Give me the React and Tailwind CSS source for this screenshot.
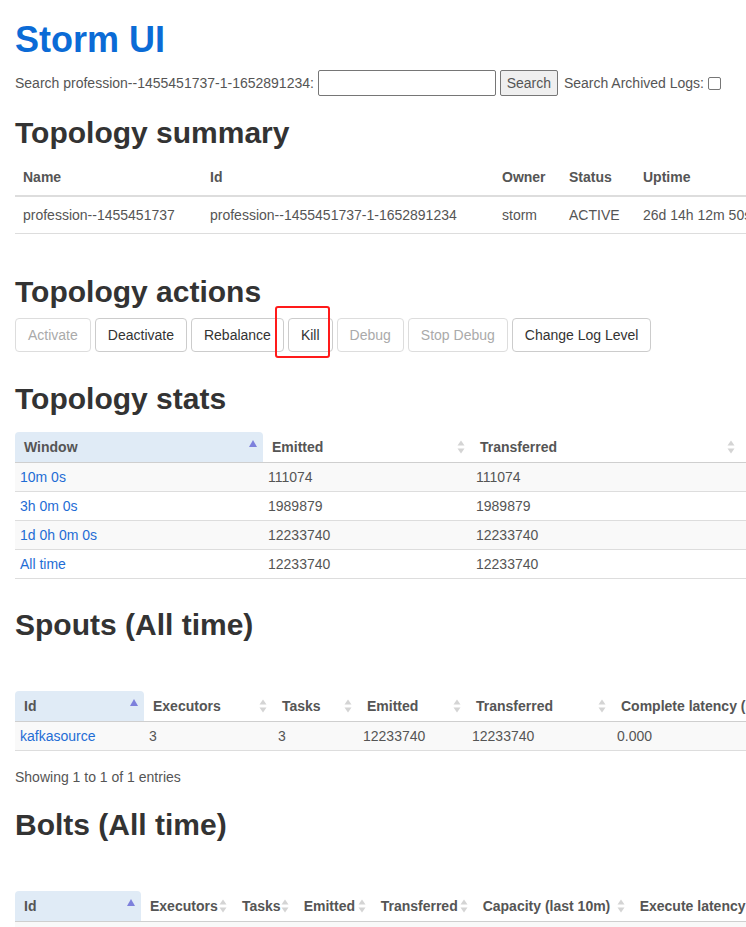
import React from 'react';

const summaryCols = [
  { label: 'Name', w: 187 },
  { label: 'Id', w: 292 },
  { label: 'Owner', w: 67 },
  { label: 'Status', w: 74 },
  { label: 'Uptime', w: 130 },
  { label: 'Num workers', w: 110 },
  { label: 'Num executors', w: 120 },
  { label: 'Num tasks', w: 100 },
];

const summaryRow = [
  'profession--1455451737',
  'profession--1455451737-1-1652891234',
  'storm',
  'ACTIVE',
  '26d 14h 12m 50s',
  '3',
  '9',
  '9',
];

const actions = [
  { label: 'Activate', disabled: true },
  { label: 'Deactivate' },
  { label: 'Rebalance' },
  { label: 'Kill' },
  { label: 'Debug', disabled: true },
  { label: 'Stop Debug', disabled: true },
  { label: 'Change Log Level' },
];

const statsCols = [
  { label: 'Window', w: 248, sorted: true },
  { label: 'Emitted', w: 208 },
  { label: 'Transferred', w: 270 },
  { label: 'Complete latency (ms)', w: 190 },
  { label: 'Acked', w: 110 },
  { label: 'Failed', w: 90 },
];

const statsRows = [
  ['10m 0s', '111074', '111074', '0.000', '0', '0'],
  ['3h 0m 0s', '1989879', '1989879', '0.000', '0', '0'],
  ['1d 0h 0m 0s', '12233740', '12233740', '0.000', '0', '0'],
  ['All time', '12233740', '12233740', '0.000', '0', '0'],
];

const spoutCols = [
  { label: 'Id', w: 129, sorted: true },
  { label: 'Executors', w: 129 },
  { label: 'Tasks', w: 85 },
  { label: 'Emitted', w: 109 },
  { label: 'Transferred', w: 145 },
  { label: 'Complete latency (ms)', w: 190 },
  { label: 'Acked', w: 90 },
  { label: 'Failed', w: 90 },
];

const spoutRows = [['kafkasource', '3', '3', '12233740', '12233740', '0.000', '0', '0']];

const boltCols = [
  { label: 'Id', w: 126, sorted: true },
  { label: 'Executors', w: 92 },
  { label: 'Tasks', w: 61 },
  { label: 'Emitted', w: 77 },
  { label: 'Transferred', w: 102 },
  { label: 'Capacity (last 10m)', w: 157 },
  { label: 'Execute latency (ms)', w: 170 },
  { label: 'Executed', w: 90 },
];

const boltRows = [['filterbolt', '3', '3', '0', '0', '0.000', '0.000', '0']];

const SortIcon = ({ active }) => (
  <svg width="8" height="14" viewBox="0 0 8 14" className="shrink-0">
    {active ? (
      <path d="M4 0 L8 7 L0 7 Z" fill="#7d80dc" />
    ) : (
      <>
        <path d="M4 0.5 L7.5 5.5 L0.5 5.5 Z" fill="#d4d4d4" />
        <path d="M4 13.5 L7.5 8.5 L0.5 8.5 Z" fill="#d4d4d4" />
      </>
    )}
  </svg>
);

const Heading = ({ children, className = '' }) => (
  <h2 className={`text-[30px] leading-[33px] font-bold text-[#333] ${className}`}>{children}</h2>
);

// DataTables-like sortable table
const SortTable = ({ cols, rows, className = '' }) => (
  <table className={`border-collapse text-[14px] leading-5 ${className}`}>
    <thead>
      <tr>
        {cols.map((c) => (
          <th
            key={c.label}
            style={{ width: c.w, minWidth: c.w }}
            className={`p-0 text-left font-bold text-[#555] border-b border-[#cfcfcf] whitespace-nowrap ${
              c.sorted ? 'bg-[#e0ebf6] rounded-t-[4px]' : ''
            }`}
          >
            <div className="flex items-center justify-between pl-[9px] pr-[6px] pt-[5px] pb-[5px]">
              <span>{c.label}</span>
              <SortIcon active={c.sorted} />
            </div>
          </th>
        ))}
      </tr>
    </thead>
    <tbody>
      {rows.map((r, i) => (
        <tr key={i} className={i % 2 === 0 ? 'bg-[#f9f9f9]' : 'bg-white'}>
          {r.map((v, j) => (
            <td
              key={j}
              className={`px-[5px] py-[4px] border-b border-[#dddddd] whitespace-nowrap ${
                j === 0 ? 'text-[#1f6dd5]' : 'text-[#555]'
              }`}
            >
              {v}
            </td>
          ))}
        </tr>
      ))}
    </tbody>
  </table>
);

const App = () => {
  return (
    <div className="w-full overflow-hidden bg-white pl-[15px] pb-10 font-['Liberation_Sans',Arial,sans-serif] text-[14px] text-[#555]">
      <h1 className="mt-[20px] text-[36px] leading-[40px] font-bold text-[#0b6bd6]">Storm UI</h1>

      {/* Search */}
      <div className="mt-[10px] flex items-center h-[26px] whitespace-nowrap">
        <span>Search profession--1455451737-1-1652891234:</span>
        <input
          type="text"
          className="ml-[4px] w-[178px] h-[26px] border border-[#767676] rounded-[2px] bg-white px-1"
        />
        <button className="ml-[4px] w-[58px] h-[26px] border border-[#767676] rounded-[2px] bg-[#efefef] text-[#555] text-[14px]">
          Search
        </button>
        <span className="ml-[6px]">Search Archived Logs:</span>
        <span className="ml-[4px] w-[13px] h-[13px] border border-[#767676] rounded-[2px] bg-white" />
      </div>

      {/* Summary */}
      <Heading className="mt-[20px]">Topology summary</Heading>
      <table className="mt-[11px] border-collapse text-[14px] leading-5">
        <thead>
          <tr>
            {summaryCols.map((c) => (
              <th
                key={c.label}
                style={{ width: c.w, minWidth: c.w }}
                className="px-2 pt-[7px] pb-2 text-left font-bold text-[#555] border-b-2 border-[#dddddd] whitespace-nowrap"
              >
                {c.label}
              </th>
            ))}
          </tr>
        </thead>
        <tbody>
          <tr>
            {summaryRow.map((v, i) => (
              <td key={i} className="px-2 pt-2 pb-[8px] text-[#555] border-b border-[#dddddd] whitespace-nowrap">
                {v}
              </td>
            ))}
          </tr>
        </tbody>
      </table>

      {/* Actions */}
      <Heading className="mt-[41px]">Topology actions</Heading>
      <div className="relative mt-[10px] flex gap-1 whitespace-nowrap">
        {actions.map((a) => (
          <button
            key={a.label}
            className={`px-3 py-[6px] leading-5 text-[14px] rounded-[4px] border bg-white ${
              a.disabled ? 'border-[#dddddd] text-[#aaaaaa]' : 'border-[#cccccc] text-[#333]'
            }`}
          >
            {a.label}
          </button>
        ))}
        <div className="absolute left-[260px] top-[-12px] w-[55px] h-[52px] border-2 border-[#ff1a1a] rounded-[3px] pointer-events-none" />
      </div>

      {/* Stats */}
      <Heading className="mt-[30px]">Topology stats</Heading>
      <SortTable cols={statsCols} rows={statsRows} className="mt-[17px]" />

      {/* Spouts */}
      <Heading className="mt-[29px]">Spouts (All time)</Heading>
      <SortTable cols={spoutCols} rows={spoutRows} className="mt-[50px]" />
      <div className="mt-[16px] leading-5 text-[#555]">Showing 1 to 1 of 1 entries</div>

      {/* Bolts */}
      <Heading className="mt-[21px]">Bolts (All time)</Heading>
      <SortTable cols={boltCols} rows={boltRows} className="mt-[50px]" />
    </div>
  );
};

export default App;
